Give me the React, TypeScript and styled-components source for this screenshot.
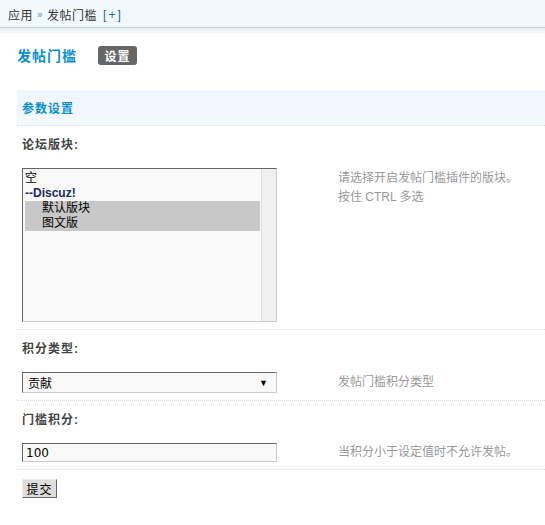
import React from "react";
import styled, { createGlobalStyle } from "styled-components";

const GlobalStyle = createGlobalStyle`
  html, body {
    margin: 0;
    padding: 0;
    background: #fff;
  }
  body {
    font: 12px "Liberation Sans", "Noto Sans CJK SC", sans-serif;
    color: #333;
  }
`;

const App: React.FC = () => {
  return (
    <>
      <GlobalStyle />
      <TopBar>
        <Crumb>应用</Crumb>
        <Arrow>»</Arrow>
        <Crumb>发帖门槛</Crumb>
        <AddLink>[+]</AddLink>
      </TopBar>
      <Page>
        <TitleRow>
          <PageTitle>发帖门槛</PageTitle>
          <Badge>设置</Badge>
        </TitleRow>
        <SectionHead>参数设置</SectionHead>

        <LabelRow>论坛版块:</LabelRow>
        <ValueRow>
          <ListBox>
            <ListItems>
              <ListItem>空</ListItem>
              <ListItem $group>--Discuz!</ListItem>
              <ListItem $selected $indent>默认版块</ListItem>
              <ListItem $selected $indent>图文版</ListItem>
            </ListItems>
            <ScrollTrack />
          </ListBox>
          <Tip $top>
            请选择开启发帖门槛插件的版块。
            <br />
            按住 CTRL 多选
          </Tip>
        </ValueRow>

        <LabelRow>积分类型:</LabelRow>
        <ValueRow>
          <FakeSelect>
            <span>贡献</span>
            <Caret>▼</Caret>
          </FakeSelect>
          <Tip>发帖门槛积分类型</Tip>
        </ValueRow>

        <LabelRow>门槛积分:</LabelRow>
        <ValueRow>
          <TextInput type="text" defaultValue="100" />
          <Tip>当积分小于设定值时不允许发帖。</Tip>
        </ValueRow>

        <SubmitRow>
          <SubmitButton type="button">提交</SubmitButton>
        </SubmitRow>
      </Page>
    </>
  );
};

export default App;

const TopBar = styled.div`
  position: relative;
  display: flex;
  align-items: center;
  height: 28px;
  padding: 2px 0 0 8px;
  box-sizing: border-box;
  background: #f2f9fd;
  border-bottom: 1px solid #b8d2dd;
  color: #333;
  letter-spacing: 0.5px;

  &::after {
    content: "";
    position: absolute;
    left: 0;
    right: 0;
    top: 28px;
    height: 7px;
    background: linear-gradient(#e4eef3, #fff);
  }
`;

const Crumb = styled.span`
  color: #333;
`;

const Arrow = styled.span`
  margin: 0 4px;
  font-size: 10px;
  font-weight: bold;
  color: #8aa9cf;
`;

const AddLink = styled.span`
  margin-left: 6px;
  color: #2366a8;
  letter-spacing: 2px;
`;

const Page = styled.div`
  position: relative;
  padding-left: 17px;
`;

const TitleRow = styled.div`
  display: flex;
  align-items: center;
  height: 22px;
  padding-top: 16px;
`;

const PageTitle = styled.h3`
  margin: 0;
  font-size: 14px;
  font-weight: bold;
  letter-spacing: 1px;
  color: #0a8fcc;
`;

const Badge = styled.span`
  display: inline-flex;
  align-items: center;
  justify-content: center;
  margin-left: 21px;
  width: 39px;
  height: 19px;
  border-radius: 3px;
  background: #666;
  color: #fff;
  font-weight: bold;
  letter-spacing: 1px;
`;

const SectionHead = styled.div`
  display: flex;
  align-items: center;
  margin-top: 24px;
  height: 35px;
  padding-left: 5px;
  background: linear-gradient(#eff6fd, #f4f9fe);
  border-bottom: 1px dotted #d4dde8;
  color: #0a8fcc;
  font-weight: bold;
  letter-spacing: 1px;
`;

const LabelRow = styled.div`
  display: flex;
  align-items: center;
  height: 34px;
  padding-left: 5px;
  font-weight: bold;
  color: #444;
  letter-spacing: 1px;
`;

const ValueRow = styled.div`
  display: grid;
  grid-template-columns: 316px 1fr;
  align-items: center;
  padding: 8px 0 7px 5px;
  border-bottom: 1px dotted #d4dde8;
`;

const ListBox = styled.div`
  display: flex;
  width: 253px;
  height: 152px;
  border: 1px solid #ccc;
  border-top-color: #666;
  border-left-color: #666;
  background: #f9f9f9;
`;

const ListItems = styled.div`
  flex: 1;
  padding: 2px 1px 0 2px;
`;

const ListItem = styled.div<{ $selected?: boolean; $indent?: boolean; $group?: boolean }>`
  height: 15px;
  line-height: 15px;
  padding-left: ${({ $indent }) => ($indent ? "17px" : "0")};
  background: ${({ $selected }) => ($selected ? "#c8c8c8" : "transparent")};
  font-weight: ${({ $group }) => ($group ? "bold" : "normal")};
  color: ${({ $group }) => ($group ? "#1b2b6b" : "#000")};
  white-space: nowrap;
`;

const ScrollTrack = styled.div`
  width: 14px;
  background: #f0f0f0;
  border-left: 1px solid #dedede;
`;

const Tip = styled.div<{ $top?: boolean }>`
  align-self: ${({ $top }) => ($top ? "start" : "center")};
  padding-top: ${({ $top }) => ($top ? "1px" : "0")};
  line-height: 19px;
  color: #999;
`;

const FakeSelect = styled.div`
  display: flex;
  align-items: center;
  justify-content: space-between;
  box-sizing: border-box;
  width: 255px;
  height: 21px;
  padding: 0 8px 0 5px;
  border: 1px solid #ccc;
  border-top-color: #666;
  border-left-color: #666;
  background: #f9f9f9;
  color: #000;
`;

const Caret = styled.span`
  font-size: 9px;
  color: #000;
`;

const TextInput = styled.input`
  box-sizing: border-box;
  width: 255px;
  height: 19px;
  margin: 0;
  padding: 0 3px;
  border: 1px solid #ccc;
  border-top-color: #666;
  border-left-color: #666;
  background: #f9f9f9;
  font: 12px "DejaVu Sans", "Noto Sans CJK SC", sans-serif;
  color: #000;
  outline: none;
`;

const SubmitRow = styled.div`
  padding: 9px 0 0 5px;
`;

const SubmitButton = styled.button`
  box-sizing: border-box;
  width: 35px;
  height: 19px;
  margin: 0;
  padding: 0;
  border: 1px solid #666;
  border-top-color: #eee;
  border-left-color: #eee;
  background: #ddd;
  font: 12px "Liberation Sans", "Noto Sans CJK SC", sans-serif;
  color: #000;
  letter-spacing: 1px;
`;
